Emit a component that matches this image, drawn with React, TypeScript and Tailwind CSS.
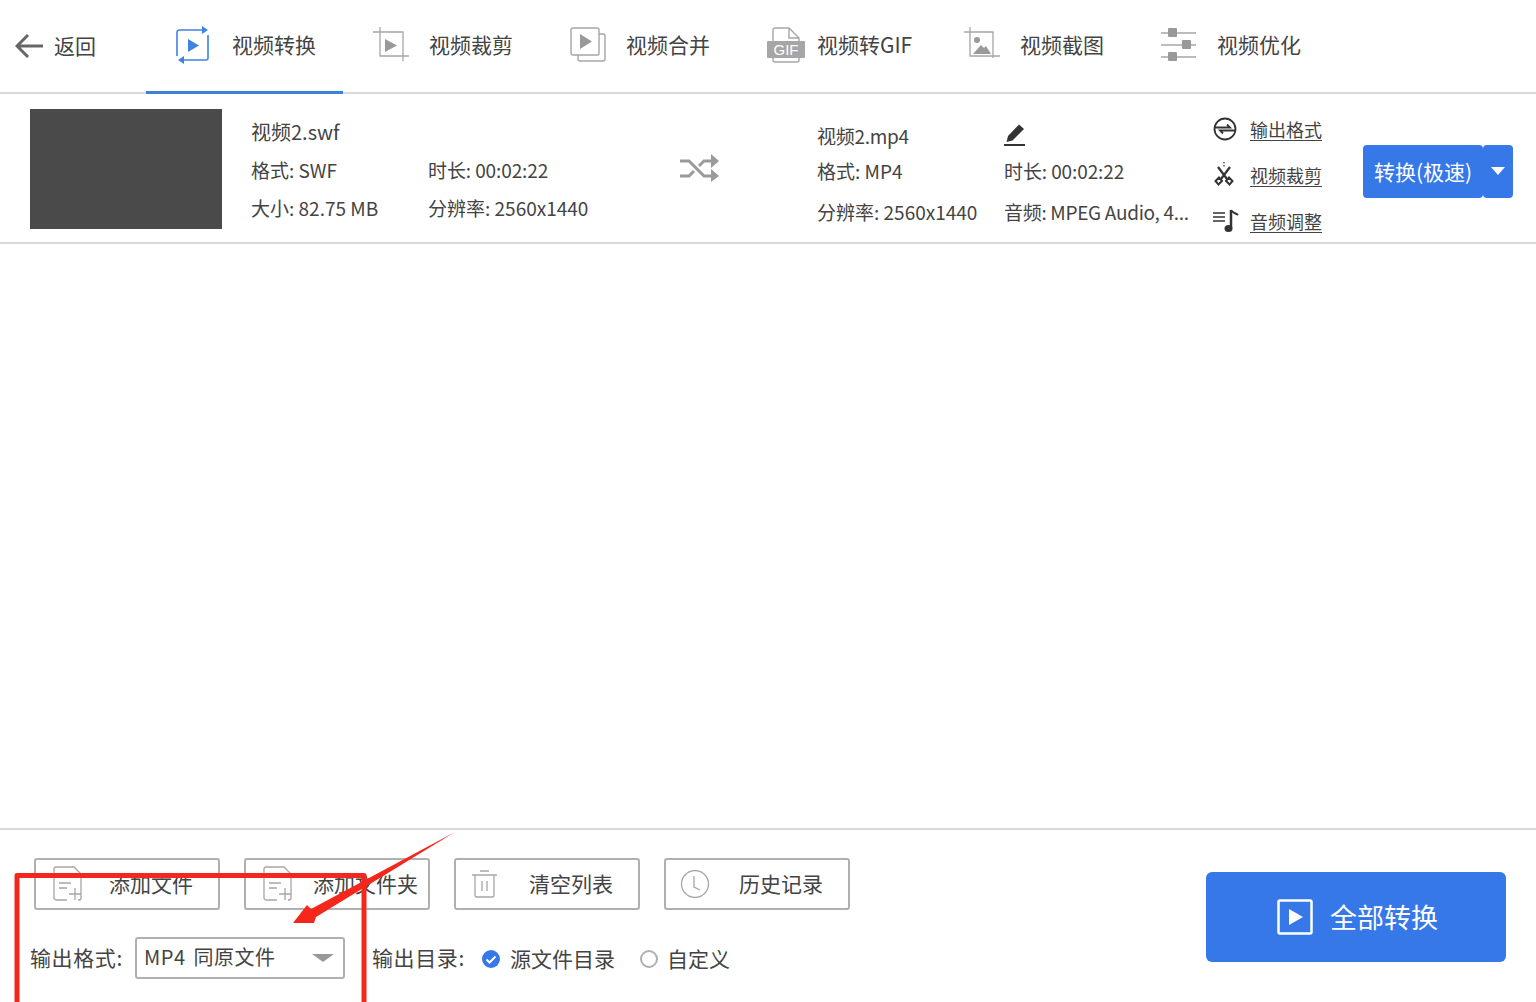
import type { ReactNode } from "react";

const G = "#a6a6a6";

// 顶部标签图标
function IconConvert() {
  return (
    <svg width="36" height="40" viewBox="0 0 36 40" fill="none" stroke="#3d84de" strokeWidth="1.6">
      <path d="M28 5H4a2.500 2.500 0 0 0-2 2v24" />
      <path d="M33 10v23a2 2 0 0 1-2 2H9" />
      <path d="M27 1l6 4-6 4zM9 31l-6 4 6 4z" fill="#3d84de" stroke="none" />
      <path d="M13 14l11 6.500-11 6.500z" fill="#3d84de" stroke="none" />
    </svg>
  );
}
function IconCrop() {
  return (
    <svg width="36" height="36" viewBox="0 0 36 36" fill="none" stroke={G} strokeWidth="1.3">
      <path d="M0 5h30v29M7 0v29h29" />
      <path d="M12 12l12 6.500-12 6.500z" fill="#999" stroke="none" />
    </svg>
  );
}
function IconMerge() {
  return (
    <svg width="36" height="36" viewBox="0 0 36 36" fill="none" stroke={G} strokeWidth="1.4">
      <rect x="1" y="1" width="28" height="27" rx="2" />
      <path d="M29 7h4a2 2 0 0 1 2 2v23a2 2 0 0 1-2 2H10a2 2 0 0 1-2-2v-4" />
      <path d="M10 7l12 7.500-12 7.500z" fill="#999" stroke="none" />
    </svg>
  );
}
function IconGif() {
  return (
    <svg width="38" height="36" viewBox="0 0 38 36" fill="none" stroke={G} strokeWidth="1.4">
      <path d="M6 14V3a2 2 0 0 1 2-2h14l10 10v3M6 31v2a2 2 0 0 0 2 2h22a2 2 0 0 0 2-2v-2M22 1v10h10" />
      <rect x="0" y="14" width="38" height="17" rx="1" fill={G} stroke="none" />
      <text x="19" y="28" textAnchor="middle" fontSize="15" fill="#fff" stroke="none" fontFamily="Liberation Sans, sans-serif">GIF</text>
    </svg>
  );
}
function IconShot() {
  return (
    <svg width="36" height="36" viewBox="0 0 36 36" fill="none" stroke={G} strokeWidth="1.3">
      <path d="M0 5h29v26M6 0v29h30" />
      <circle cx="13" cy="13" r="3" fill="#999" stroke="none" />
      <path d="M9 27l8-9 3 3 2-2 5 8z" fill="#999" stroke="none" />
    </svg>
  );
}
function IconTune() {
  return (
    <svg width="36" height="36" viewBox="0 0 36 36" stroke={G} strokeWidth="1.4" fill="#999">
      <path d="M0 6h35M0 18h35M0 30h35" />
      <rect x="7" y="1" width="9" height="9" rx="1" stroke="none" />
      <rect x="21" y="13" width="9" height="9" rx="1" stroke="none" />
      <rect x="7" y="25" width="9" height="9" rx="1" stroke="none" />
    </svg>
  );
}

// 文件行图标
function IconShuffle() {
  return (
    <svg width="40" height="28" viewBox="0 0 40 28" fill="none" stroke="#9a9a9a" strokeWidth="3">
      <path d="M0 7h9l15 15h8M0 22h9l5-5M19 12l5-5h8" />
      <path d="M31 0l8 7-8 7zM31 15l8 7-8 6z" fill="#9a9a9a" stroke="none" />
    </svg>
  );
}
function IconPencil() {
  return (
    <svg width="22" height="24" viewBox="0 0 22 24" fill="#333">
      <path d="M4 14L15 2.500l5 4.500L8.500 18.500 2.500 20z" />
      <rect x="0" y="22" width="21" height="2" />
    </svg>
  );
}
function IconFormat() {
  return (
    <svg width="24" height="24" viewBox="0 0 24 24" fill="none" stroke="#333" strokeWidth="1.800">
      <circle cx="12" cy="12" r="10.500" />
      <path d="M2 10.500h15l-3-3M22 13.500H7l3 3" />
    </svg>
  );
}
function IconScissors() {
  return (
    <svg width="22" height="26" viewBox="0 0 22 26" fill="none" stroke="#333" strokeWidth="2.200">
      <path d="M11 0v6" strokeWidth="1.200" strokeDasharray="1.500 1.500" />
      <path d="M5 5l9 12M17 5l-9 12" />
      <path d="M6 15.500l-3.500 3.500 3 3.500 3.500-3.500zM16 15.500l3.500 3.500-3 3.500-3.500-3.500z" strokeWidth="2" />
    </svg>
  );
}
function IconAudio() {
  return (
    <svg width="26" height="24" viewBox="0 0 26 24" fill="#333" stroke="#333">
      <path d="M0 4h12M0 8h12M0 12h12" strokeWidth="1.500" fill="none" />
      <path d="M18 1v18" strokeWidth="2.500" fill="none" />
      <path d="M18 1c1 3 5 3 7 5" strokeWidth="2" fill="none" />
      <ellipse cx="15.500" cy="19.500" rx="4" ry="3.500" stroke="none" />
    </svg>
  );
}

// 底部按钮图标
function IconAddFile() {
  return (
    <svg width="29" height="36" viewBox="0 0 29 36" fill="none" stroke={G} strokeWidth="1.300">
      <path d="M14 34H3a2 2 0 0 1-2-2V3a2 2 0 0 1 2-2h18l7 7v24a2 2 0 0 1-2 2h-1" />
      <path d="M6 17h12M6 22h8M16 28h12M22 22v12" />
    </svg>
  );
}
function IconTrash() {
  return (
    <svg width="26" height="28" viewBox="0 0 26 28" fill="none" stroke={G} strokeWidth="1.300">
      <path d="M0 5h25M8 1h9M3 5v20a2 2 0 0 0 2 2h15a2 2 0 0 0 2-2V5M10 11v10M15 11v10" />
    </svg>
  );
}
function IconClock() {
  return (
    <svg width="30" height="28" viewBox="0 0 30 28" fill="none" stroke={G} strokeWidth="1.300">
      <circle cx="15" cy="14" r="13.500" />
      <path d="M14 6v11l6 3" />
    </svg>
  );
}

const tabs: { icon: ReactNode; label: string; cls: string; active?: boolean }[] = [
  { icon: <IconConvert />, label: "视频转换", cls: "w-[57px] ml-[29px]", active: true },
  { icon: <IconCrop />, label: "视频裁剪", cls: "w-[56px] ml-[30px]" },
  { icon: <IconMerge />, label: "视频合并", cls: "w-[56px] ml-[30px]" },
  { icon: <IconGif />, label: "视频转GIF", cls: "w-[50px] ml-[30px]" },
  { icon: <IconShot />, label: "视频截图", cls: "w-[56px] ml-[30px]" },
  { icon: <IconTune />, label: "视频优化", cls: "w-[56px] ml-[30px]" },
];

const actions = [
  { icon: <IconAddFile />, label: "添加文件", cls: "w-[56px] ml-[0px]" },
  { icon: <IconAddFile />, label: "添加文件夹", cls: "w-[50px] ml-[0px]" },
  { icon: <IconTrash />, label: "清空列表", cls: "w-[57px] -ml-[1px]" },
  { icon: <IconClock />, label: "历史记录", cls: "w-[59px] -ml-[3px]" },
];

export default function App() {
  return (
    <div className="relative flex h-[1002px] flex-col overflow-hidden bg-white font-['Noto_Sans_CJK_SC',sans-serif] text-[#444]">
      {/* 顶部导航 */}
      <header className="flex h-[94px] shrink-0 border-b-2 border-[#d9d9d9]">
        <div className="flex w-[146px] shrink-0 items-center pl-[15px]">
          <svg width="28" height="26" viewBox="0 0 28 26" fill="none" stroke="#666" strokeWidth="3">
            <path d="M28 13H3M13 2L2 13l11 11" />
          </svg>
          <span className="ml-[11px] -mt-[2px] text-[21px] leading-none">返回</span>
        </div>
        {tabs.map((t) => (
          <div
            key={t.label}
            className={`-mb-[2px] flex h-[94px] w-[197px] shrink-0 items-center border-b-[3px] pb-[2px] ${t.active ? "border-[#3d7fd9]" : "border-transparent"}`}
          >
            <span className={`mt-[1px] flex shrink-0 ${t.cls}`}>{t.icon}</span>
            <span className="text-[21px] leading-none">{t.label}</span>
          </div>
        ))}
      </header>

      {/* 文件行 */}
      <section className="flex h-[150px] shrink-0 border-b-2 border-[#d9d9d9]">
        <div className="ml-[30px] mt-[15px] h-[120px] w-[192px] shrink-0 bg-[#4a4a4a]" />
        <div className="ml-[29px] grid w-[429px] shrink-0 grid-cols-[177px_1fr] grid-rows-[36px_38px_38px] items-center pt-[20px] text-[19px] leading-none">
          <span className="col-span-2 text-[20px]">视频2.swf</span>
          <span>格式: SWF</span>
          <span className="tracking-[-0.1px]">时长: 00:02:22</span>
          <span>大小: 82.75 MB</span>
          <span>分辨率: 2560x1440</span>
        </div>
        <div className="mt-[60px] w-[40px] shrink-0">
          <IconShuffle />
        </div>
        <div className="ml-[97px] grid w-[396px] shrink-0 grid-cols-[187px_1fr] grid-rows-[34px_36px_46px] items-center pt-[24px] text-[19px] leading-none">
          <span className="tracking-[-0.3px]">视频2.mp4</span>
          <span className="-mt-[2px]"><IconPencil /></span>
          <span>格式: MP4</span>
          <span className="tracking-[-0.1px]">时长: 00:02:22</span>
          <span>分辨率: 2560x1440</span>
          <span className="whitespace-nowrap tracking-[-0.3px]">音频: MPEG Audio, 4...</span>
        </div>
        <div className="flex w-[150px] shrink-0 flex-col pt-[12px] text-[18px] leading-none">
          {[
            { icon: <IconFormat />, label: "输出格式" },
            { icon: <IconScissors />, label: "视频裁剪" },
            { icon: <IconAudio />, label: "音频调整" },
          ].map((o) => (
            <div key={o.label} className="flex h-[46px] shrink-0 items-center">
              <span className="flex w-[37px] shrink-0">{o.icon}</span>
              <span className="underline underline-offset-[3px]">{o.label}</span>
            </div>
          ))}
        </div>
        <div className="mt-[51px] flex h-[53px] shrink-0 text-white">
          <button className="h-full w-[120px] rounded-[4px] bg-[#3778e8] text-[21px] leading-none">转换(极速)</button>
          <button className="flex h-full w-[30px] items-center justify-center rounded-[4px] bg-[#3778e8]">
            <span className="mt-[-1px] h-0 w-0 border-x-[7px] border-t-[8px] border-x-transparent border-t-white" />
          </button>
        </div>
      </section>

      <main className="flex-1" />

      {/* 底部操作区 */}
      <footer className="flex h-[174px] shrink-0 border-t-2 border-[#d9d9d9] pl-[34px]">
        <div className="w-[1172px] shrink-0 pt-[28px]">
          <div className="flex gap-[24px]">
            {actions.map((a) => (
              <button key={a.label} className="flex h-[52px] w-[186px] items-center rounded-[3px] border-2 border-[#b0b0b0] pl-[17px] text-[21px] leading-none">
                <span className={`flex shrink-0 ${a.cls}`}>{a.icon}</span>
                <span className="-mt-[2px]">{a.label}</span>
              </button>
            ))}
          </div>
          <div className="-ml-[4px] mt-[27px] flex h-[42px] items-center text-[21px] leading-none">
            <span className="-mt-[2px] w-[105px] shrink-0 tracking-[0.6px]">输出格式:</span>
            <div className="flex h-[42px] w-[210px] shrink-0 items-center justify-between rounded-[3px] border-2 border-[#b0b0b0] pl-[7px] pr-[9px] text-[20px]">
              <span className="-mt-[2px] tracking-[0.5px] [word-spacing:3px]">MP4 同原文件</span>
              <span className="h-0 w-0 border-x-[11px] border-t-[8px] border-x-transparent border-t-[#999]" />
            </div>
            <span className="-mt-[2px] ml-[27px] w-[110px] shrink-0 tracking-[0.6px]">输出目录:</span>
            <svg width="18" height="18" viewBox="0 0 18 18" className="mt-[2px] shrink-0">
              <circle cx="9" cy="9" r="9" fill="#3778e8" />
              <path d="M4.500 9.500l3 3 6-6" fill="none" stroke="#fff" strokeWidth="2" />
            </svg>
            <span className="ml-[10px] mt-[1px]">源文件目录</span>
            <span className="ml-[25px] mt-[2px] h-[18px] w-[18px] shrink-0 rounded-full border-2 border-[#b0b0b0]" />
            <span className="ml-[9px] mt-[1px]">自定义</span>
          </div>
        </div>
        <button className="mt-[42px] flex h-[90px] w-[300px] shrink-0 items-center justify-center gap-[17px] rounded-[6px] bg-[#3778e8] pl-[3px] text-[27px] leading-none text-white">
          <svg width="36" height="36" viewBox="0 0 36 36" fill="none" stroke="#fff" strokeWidth="2.500">
            <rect x="1.500" y="1.500" width="33" height="33" rx="1.500" />
            <path d="M12 10l14 8-14 8z" fill="#fff" stroke="none" />
          </svg>
          <span className="-mt-[1px]">全部转换</span>
        </button>
      </footer>

      {/* 红框和箭头标注 */}
      <svg className="absolute left-0 top-0" width="1536" height="1002" viewBox="0 0 1536 1002" fill="none">
        <path d="M17 1006V875.500H364V1006" stroke="#f5261c" strokeWidth="5" strokeLinejoin="round" />
        <path d="M455 832L316 917L314 923L293 923L307 905L311 909Z" fill="#f5261c" />
      </svg>
    </div>
  );
}
